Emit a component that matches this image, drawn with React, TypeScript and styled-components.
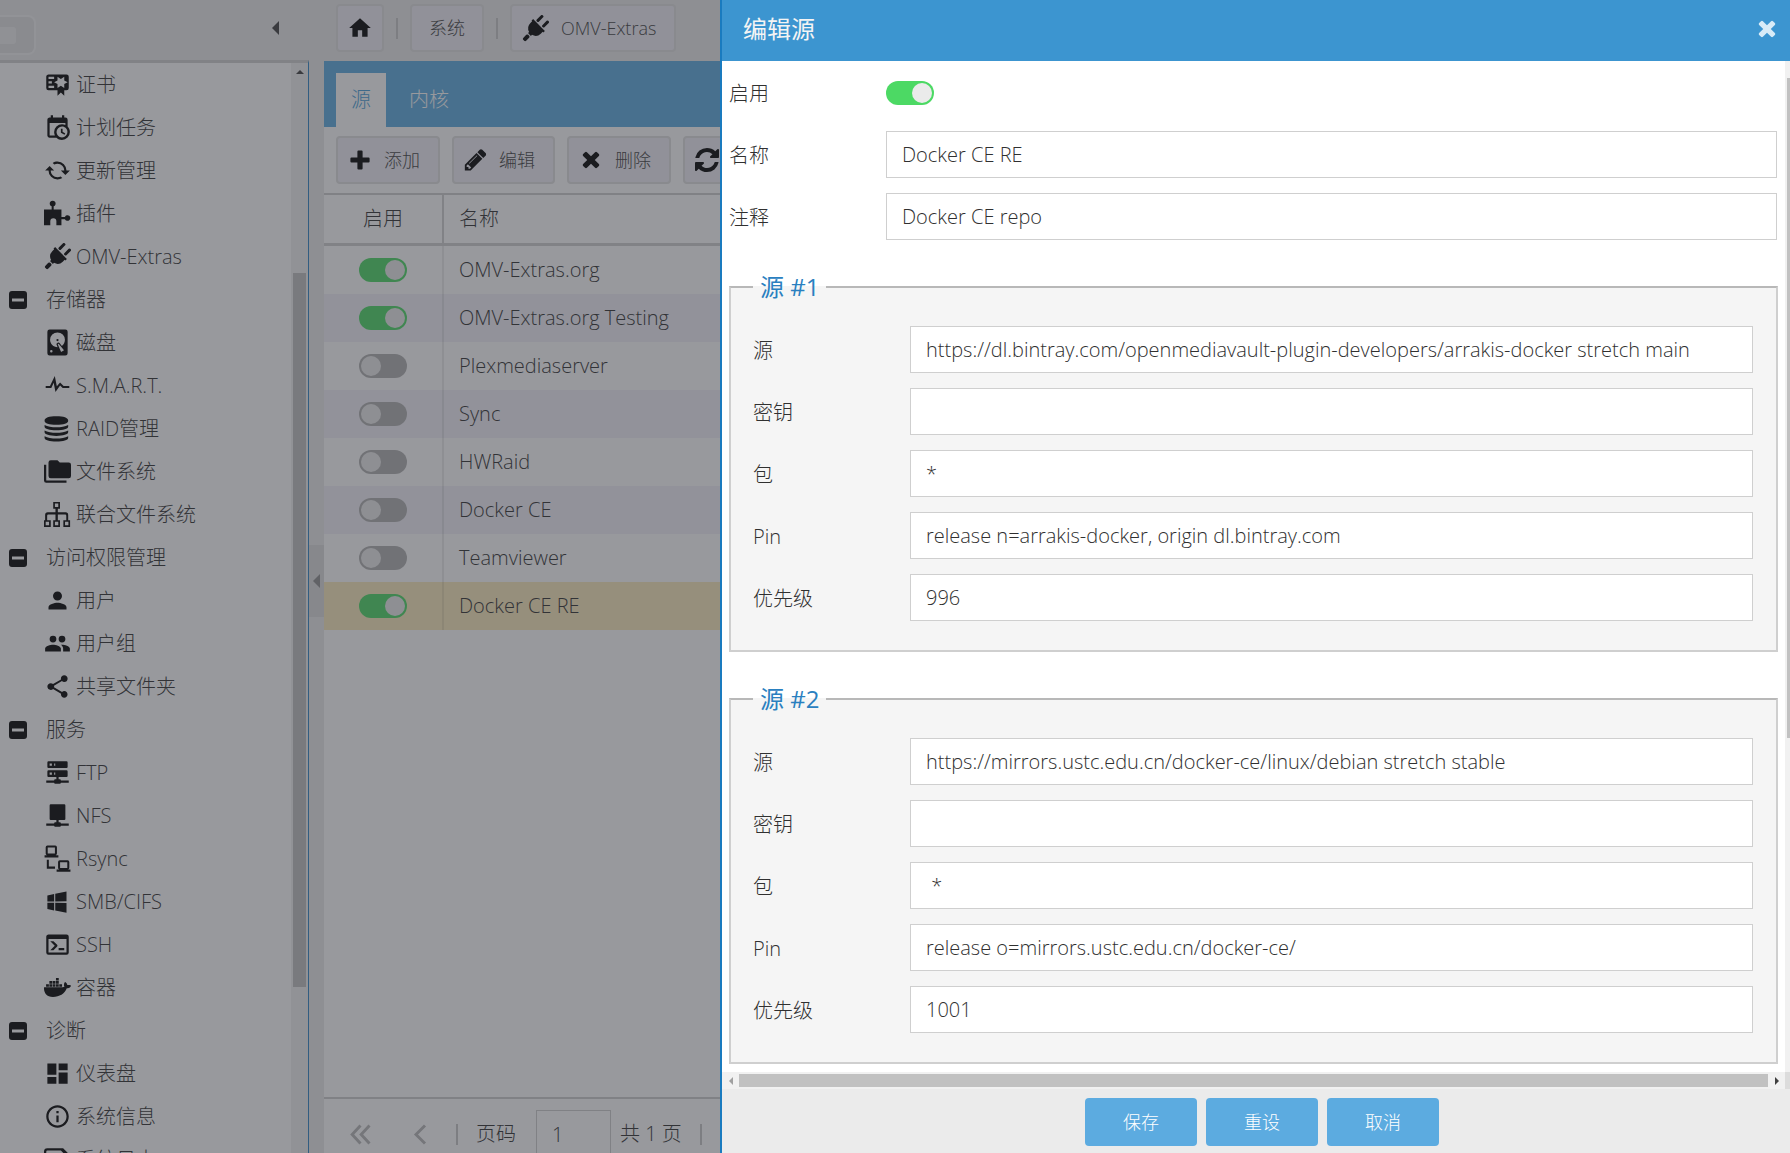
import React, { useState } from 'react';
import styled, { createGlobalStyle } from 'styled-components';
import { MdDashboard, MdHome, MdInfoOutline, MdPerson, MdShare } from 'react-icons/md';
import { FaDocker } from 'react-icons/fa';

const GlobalStyle = createGlobalStyle`
  * { box-sizing: border-box; }
  body {
    margin: 0;
    overflow: hidden;
    background: #ebebeb;
    color: #303030;
    font-family: "Open Sans", "Noto Sans CJK SC", sans-serif;
    font-size: 20px;
    font-weight: 300;
    line-height: 28px;
  }
  button, input { font: inherit; color: inherit; }
  button { cursor: pointer; }
`;

/* ---------- icons ---------- */

const Glyph = styled.svg<{ $size?: number }>`
  display: block;
  flex: none;
  width: ${(p) => p.$size ?? 27}px;
  height: ${(p) => p.$size ?? 27}px;
  fill: currentColor;
`;

const PathIcon = ({ d, size, box = '0 0 24 24' }: { d: string; size?: number; box?: string }) => (
  <Glyph $size={size} viewBox={box} fillRule="evenodd" aria-hidden="true">
    <path d={d} />
  </Glyph>
);

const paths = {
  certificate:
    'M4,3C2.89,3 2,3.89 2,5V15A2,2 0 0,0 4,17H12V22L15,19L18,22V17H20A2,2 0 0,0 22,15V8L22,6V5A2,2 0 0,0 20,3H16V3H4M12,5L15,7L18,5V8.5L21,10L18,11.5V15L15,13L12,15V11.5L9,10L12,8.5V5M4,5H9V7H4V5M4,9H7V11H4V9M4,13H9V15H4V13Z',
  calendar:
    'M15,13H16.5V15.82L18.94,17.23L18.19,18.53L15,16.69V13M19,8H5V19H9.67C9.24,18.09 9,17.07 9,16A7,7 0 0,1 16,9C17.07,9 18.09,9.24 19,9.67V8M5,21C3.89,21 3,20.1 3,19V5C3,3.89 3.89,3 5,3H6V1H8V3H16V1H18V3H19A2,2 0 0,1 21,5V11.1C22.24,12.36 23,14.09 23,16A7,7 0 0,1 16,23C14.09,23 12.36,22.24 11.1,21H5M16,11.15A4.85,4.85 0 0,0 11.15,16C11.15,18.68 13.32,20.85 16,20.85A4.85,4.85 0 0,0 20.85,16C20.85,13.32 18.68,11.15 16,11.15Z',
  update:
    'M19,16L15,12H18C18,8.69 15.31,6 12,6C11,6 10.03,6.25 9.2,6.7L7.74,5.24C8.97,4.46 10.43,4 12,4A8,8 0 0,1 20,12H23L19,16M6,12C6,15.31 8.69,18 12,18C13,18 13.97,17.75 14.8,17.3L16.26,18.76C15.03,19.54 13.57,20 12,20A8,8 0 0,1 4,12H1L5,8L9,12H6Z',
  puzzle:
    'M0,8.5H6.8V5.6A2.6,2.6 0 1,1 8.6,5.6V8.5H15.5V15H18.6A2.5,2.5 0 1,1 18.6,17H15.5V22.5H11V19A2.7,2.7 0 1,0 5.6,19V22.5H0Z',
  disk:
    'M5,0.5H19A2,2 0 0,1 21,2.5V21.5A2,2 0 0,1 19,23.5H5A2,2 0 0,1 3,21.5V2.5A2,2 0 0,1 5,0.5M12,3A6.6,6.6 0 0,0 5.4,9.6C5.4,13.2 8.4,16.2 12.1,16.2L11.22,13.97C10.95,13.4 11.11,12.88 11.59,12.6L12.45,12.1C12.93,11.8 13.54,11.99 13.82,12.47L15.9,15C17.6,13.8 18.6,11.8 18.6,9.6A6.6,6.6 0 0,0 12,3M12,8.8A1,1 0 0,1 12,10.8A1,1 0 0,1 12,8.8M6.5,18.6A1.1,1.1 0 0,0 6.5,20.8A1.1,1.1 0 0,0 6.5,18.6M12.2,13.6L15.2,20.4L17.8,18.9L13,13.1L12.2,13.6Z',
  pulse:
    'M1.5,12.5H5.3L9.6,3.6L11.4,12.6L14.3,9.4L17.4,12.5H22.5V14.3H16.6L14.3,12L10.2,17.8L8.6,9.6L6.5,14.3H1.5Z',
  database:
    'M0.5,5C0.5,2.5 4.5,1.2 11,1.2S21.5,2.5 21.5,5S17.5,8.6 11,8.6S0.5,7.5 0.5,5M0.5,8.8C3,10.4 7,10.8 11,10.8S19,10.4 21.5,8.8V10.2C21.5,12.4 17,13.6 11,13.6S0.5,12.4 0.5,10.2ZM0.5,13.8C3,15.4 7,15.8 11,15.8S19,15.4 21.5,13.8V15.2C21.5,17.4 17,18.6 11,18.6S0.5,17.4 0.5,15.2ZM0.5,18.8C3,20.4 7,20.8 11,20.8S19,20.4 21.5,18.8V20.2C21.5,22.4 17,23.6 11,23.6S0.5,22.4 0.5,20.2Z',
  folders:
    'M22,4H14L12,2H6A2,2 0 0,0 4,4V16A2,2 0 0,0 6,18H22A2,2 0 0,0 24,16V6A2,2 0 0,0 22,4M2,6H0V20A2,2 0 0,0 2,22H20V20H2V6Z',
  sitemap:
    'M8.2,0.8H14.2V6.8H12.3V10H19.2Q21.5,10 21.5,12.5V17H23.2V23H17.2V17H19.8V13Q19.8,12 18.8,12H12.3V17H14.2V23H8.2V17H10.2V12H3.8Q2.8,12 2.8,13V17H6V23H0V17H1V12.5Q1,10 3.3,10H10.2V6.8H8.2ZM9.7,2.3V5.3H12.7V2.3ZM1.5,18.5V21.5H4.5V18.5ZM9.7,18.5V21.5H12.7V18.5ZM18.7,18.5V21.5H21.7V18.5Z',
  group:
    'M16,13C15.71,13 15.38,13 15.03,13.05C16.19,13.89 17,15 17,16.5V19H23V16.5C23,14.17 18.33,13 16,13M8,13C5.67,13 1,14.17 1,16.5V19H15V16.5C15,14.17 10.33,13 8,13M8,11A3,3 0 0,0 11,8A3,3 0 0,0 8,5A3,3 0 0,0 5,8A3,3 0 0,0 8,11M16,11A3,3 0 0,0 19,8A3,3 0 0,0 16,5A3,3 0 0,0 13,8A3,3 0 0,0 16,11Z',
  server:
    'M13,18H14A1,1 0 0,1 15,19H22V21H15A1,1 0 0,1 14,22H10A1,1 0 0,1 9,21H2V19H9A1,1 0 0,1 10,18H11V16H4A1,1 0 0,1 3,15V11A1,1 0 0,1 4,10H20A1,1 0 0,1 21,11V15A1,1 0 0,1 20,16H13V18M4,2H20A1,1 0 0,1 21,3V7A1,1 0 0,1 20,8H4A1,1 0 0,1 3,7V3A1,1 0 0,1 4,2M9,6H10V4H9V6M9,14H10V12H9V14M5,4V6H7V4H5M5,12V14H7V12H5Z',
  nfs: 'M13,18H14A1,1 0 0,1 15,19H22V21H15A1,1 0 0,1 14,22H10A1,1 0 0,1 9,21H2V19H9A1,1 0 0,1 10,18H11V16H6A1,1 0 0,1 5,15V3A1,1 0 0,1 6,2H18A1,1 0 0,1 19,3V15A1,1 0 0,1 18,16H13Z',
  rsync:
    'M3,0.5H10A1.5,1.5 0 0,1 11.5,2V7.5A1.5,1.5 0 0,1 10.4,9H12.8V11H0.5V9H2.6A1.5,1.5 0 0,1 1.5,7.5V2A1.5,1.5 0 0,1 3,0.5M3.3,2.3V7.5H9.7V2.3ZM2.5,13H4.3V19H9.8V21H2.5ZM14,13.5H21A1.5,1.5 0 0,1 22.5,15V20A1.5,1.5 0 0,1 21.4,21.7H23.5V23.7H11.2V21.7H13.6A1.5,1.5 0 0,1 12.5,20V15A1.5,1.5 0 0,1 14,13.5M14.3,15.3V20.5H20.7V15.3Z',
  windows:
    'M3,12V6.75L9,5.43V11.91L3,12M20,3V11.75L10,11.9V5.21L20,3M3,13L9,13.09V19.9L3,18.75V13M20,13.25V22L10,20.09V13.1L20,13.25Z',
  console:
    'M20,19V7H4V19H20M20,3A2,2 0 0,1 22,5V19A2,2 0 0,1 20,21H4A2,2 0 0,1 2,19V5C2,3.89 2.9,3 4,3H20M13,17V15H18V17H13M9.58,13L5.57,9H8.4L11.7,12.3C12.09,12.69 12.09,13.33 11.7,13.72L8.42,17H5.59L9.58,13Z',
  log: 'M3,2H17L23,8V22H3A3,3 0 0,1 0,19V5A3,3 0 0,1 3,2M3,4A1,1 0 0,0 2,5V19A1,1 0 0,0 3,20H20V9L15,4Z',
  minus:
    'M4,0H20A4,4 0 0,1 24,4V20A4,4 0 0,1 20,24H4A4,4 0 0,1 0,20V4A4,4 0 0,1 4,0M4,10V14H20V10Z',
  plus: 'M10.4,2.4H13.6A1,1 0 0,1 14.6,3.4V9.4H20.6A1,1 0 0,1 21.6,10.4V13.6A1,1 0 0,1 20.6,14.6H14.6V20.6A1,1 0 0,1 13.6,21.6H10.4A1,1 0 0,1 9.4,20.6V14.6H3.4A1,1 0 0,1 2.4,13.6V10.4A1,1 0 0,1 3.4,9.4H9.4V3.4A1,1 0 0,1 10.4,2.4Z',
  cross:
    'M1298 1322q0 40-28 68l-136 136q-28 28-68 28t-68-28l-294-294-294 294q-28 28-68 28t-68-28l-136-136q-28-28-28-68t28-68l294-294-294-294q-28-28-28-68t28-68l136-136q28-28 68-28t68 28l294 294 294-294q28-28 68-28t68 28l136 136q28 28 28 68t-28 68l-294 294 294 294q28 28 28 68z',
  pencil:
    'M363 1536l91-91-235-235-91 91v107h128v128h107zM886 608q0-22-22-22-10 0-17 7l-542 542q-7 7-7 17 0 22 22 22 10 0 17-7l542-542q7-7 7-17zM832 416l416 416-832 832h-416v-416zM1515 512q0 53-37 90l-166 166-416-416 166-165q36-38 90-38 53 0 91 38l235 234q37 39 37 91z',
  refresh:
    'M1511 1056q0 5-1 7-64 268-268 434.5t-478 166.5q-146 0-282.5-55t-243.5-157l-129 129q-19 19-45 19t-45-19-19-45v-448q0-26 19-45t45-19h448q26 0 45 19t19 45-19 45l-137 137q71 66 161 102t187 36q134 0 250-65t186-179q11-17 53-117 8-23 30-23h192q13 0 22.5 9.5t9.5 22.5zM1536 256v448q0 26-19 45t-45 19h-448q-26 0-45-19t-19-45 19-45l138-138q-148-137-349-137-134 0-250 65t-186 179q-11 17-53 117-8 23-30 23h-199q-13 0-22.5-9.5t-9.5-22.5v-7q65-268 270-434.5t480-166.5q146 0 284 55.5t245 156.5l130-129q19-19 45-19t45 19 19 45z',
};

const CrossIcon = () => <PathIcon d={paths.cross} size={24} box="-160 96 1728 1728" />;

const PlugIcon = () => (
  <Glyph viewBox="0 0 24 24" aria-hidden="true">
    <g transform="rotate(45 12 12)">
      <path d="M4.6,7.6H19.4V9.6H18.6V12A6.6,6.6 0 0 1 13.8,18.2V19.6H10.2V18.2A6.6,6.6 0 0 1 5.4,12V9.6H4.6Z" />
      <rect x="7.2" y="-0.8" width="2.6" height="7.4" rx="1" />
      <rect x="14.2" y="-0.8" width="2.6" height="7.4" rx="1" />
      <rect x="10.2" y="20.6" width="3.6" height="6.2" rx="1.2" />
    </g>
  </Glyph>
);

const FirstPage = () => (
  <Glyph viewBox="0 0 24 24" aria-hidden="true">
    <path d="M12,4L4.6,12L12,20M20,4L12.6,12L20,20" fill="none" stroke="currentColor" strokeWidth="2.6" />
  </Glyph>
);

const PreviousPage = () => (
  <Glyph viewBox="0 0 24 24" aria-hidden="true">
    <path d="M16,4L8,12L16,20" fill="none" stroke="currentColor" strokeWidth="2.6" />
  </Glyph>
);

/* ---------- shared ---------- */

const Shell = styled.div`
  display: flex;
  height: 100vh;
  overflow: hidden;
`;

const Arrow = styled.span<{ $dir: 'up' | 'left' | 'right'; $size: number; $color?: string }>`
  width: 0;
  height: 0;
  border: ${(p) => p.$size}px solid transparent;
  ${(p) => p.$dir === 'up' && `border-top-width: 0; border-bottom-color: ${p.$color ?? '#404040'};`}
  ${(p) => p.$dir === 'left' && `border-left-width: 0; border-right-color: ${p.$color ?? '#404040'};`}
  ${(p) => p.$dir === 'right' && `border-right-width: 0; border-left-color: ${p.$color ?? '#404040'};`}
`;

const PlainButton = styled.button`
  display: flex;
  align-items: center;
  justify-content: center;
  padding: 0;
  border: 0;
  background: none;
`;

const Toggle = styled.input`
  appearance: none;
  flex: none;
  display: flex;
  width: 48px;
  height: 24px;
  margin: 0;
  padding: 2px;
  border-radius: 12px;
  background: #b0b0b0;
  &::before {
    content: '';
    width: 20px;
    height: 20px;
    border-radius: 50%;
    background: #ebebeb;
  }
  &:checked {
    background: #4cd964;
    justify-content: flex-end;
  }
`;

/* ---------- sidebar ---------- */

const Sidebar = styled.aside`
  flex: none;
  display: flex;
  flex-direction: column;
  width: 309px;
`;

const Brand = styled.div`
  flex: none;
  display: flex;
  align-items: center;
  justify-content: space-between;
  height: 60px;
  padding-right: 22px;
`;

const BrandMark = styled.div`
  display: flex;
  align-items: center;
  width: 36px;
  height: 40px;
  margin-top: 10px;
  border: 2px solid #f2f2f2;
  border-left: 0;
  border-radius: 0 8px 8px 0;
  background: #e2e2e2;
  &::before {
    content: '';
    width: 16px;
    height: 17px;
    border-radius: 0 3px 3px 0;
    background: #efefef;
  }
`;

const CollapseButton = styled(PlainButton)`
  width: 24px;
  height: 40px;
  margin-bottom: 5px;
`;

const NavArea = styled.div`
  flex: 1;
  min-height: 0;
  display: flex;
  border-top: 3px solid #d0d0d0;
  border-right: 1px solid #2f86c6;
  background: #fff;
`;

const NavList = styled.ul`
  flex: 1;
  margin: 0;
  padding: 0;
  list-style: none;
  overflow: hidden;
`;

const NavLink = styled.a<{ $group?: boolean }>`
  display: flex;
  align-items: center;
  height: 43px;
  padding-left: ${(p) => (p.$group ? 9 : 44)}px;
  gap: ${(p) => (p.$group ? 19 : 5)}px;
  color: #000;
  text-decoration: none;
`;

const NavText = styled.span`
  color: #303030;
`;

const Track = styled.div`
  flex: none;
  display: flex;
  flex-direction: column;
  align-items: center;
  width: 17px;
  background: #f1f1f1;
`;

const TrackEnd = styled.div`
  flex: none;
  display: flex;
  align-items: center;
  justify-content: center;
  width: 17px;
  height: 17px;
`;

const Thumb = styled.div<{ $grow: number }>`
  flex: ${(p) => p.$grow};
  width: 13px;
  background: #c1c1c1;
`;

const TrackSpace = styled.div<{ $grow: number }>`
  flex: ${(p) => p.$grow};
`;

const Splitter = styled.div`
  flex: none;
  display: flex;
  align-items: center;
  width: 15px;
  padding-top: 9px;
`;

const SplitHandle = styled(PlainButton)`
  width: 15px;
  height: 72px;
  background: #dddddd;
`;

/* ---------- main panel ---------- */

const Main = styled.main`
  flex: 1;
  min-width: 0;
  display: flex;
  flex-direction: column;
`;

const Breadcrumbs = styled.nav`
  flex: none;
  display: flex;
  align-items: center;
  gap: 12px;
  height: 61px;
  padding: 0 12px 5px;
`;

const Divider = styled.span`
  width: 2px;
  height: 21px;
  background: #c8c8c8;
`;

const ToolButton = styled.button<{ $compact?: boolean }>`
  flex: none;
  display: flex;
  align-items: center;
  justify-content: center;
  gap: 12px;
  height: 48px;
  padding: 0 ${(p) => (p.$compact ? 9 : 18)}px 0 ${(p) => (p.$compact ? 9 : 10)}px;
  border: 2px solid #e0e0e0;
  border-radius: 4px;
  background: #f0eff6;
  color: #000;
  font-size: 18px;
`;

const ToolText = styled.span`
  color: #404040;
`;

const CrumbText = styled(ToolText)`
  padding: 0 8px;
`;

const TabBar = styled.div`
  flex: none;
  display: flex;
  align-items: flex-end;
  gap: 8px;
  height: 66px;
  padding: 0 12px;
  background: #5cace0;
`;

const Tab = styled.button<{ $active?: boolean }>`
  height: 54px;
  padding: 0 15px;
  border: 0;
  background: ${(p) => (p.$active ? '#fff' : 'transparent')};
  color: ${(p) => (p.$active ? '#4a9fd8' : '#fff')};
`;

const Toolbar = styled.div`
  flex: none;
  display: flex;
  align-items: center;
  gap: 12px;
  height: 68px;
  padding: 0 12px;
  border-bottom: 2px solid #cfcfcf;
  background: #fff;
`;

const GridArea = styled.div`
  flex: 1;
  min-height: 0;
  background: #fff;
`;

const Grid = styled.table`
  width: 100%;
  border-collapse: separate;
  border-spacing: 0;
  table-layout: fixed;
`;

const HeadCell = styled.th<{ $narrow?: boolean }>`
  width: ${(p) => (p.$narrow ? '120px' : 'auto')};
  height: 51px;
  padding: 0 ${(p) => (p.$narrow ? 0 : 15)}px;
  border-bottom: 3px solid #d0d0d0;
  border-right: ${(p) => (p.$narrow ? '2px solid #d0d0d0' : '0')};
  font-weight: 300;
  text-align: ${(p) => (p.$narrow ? 'center' : 'left')};
`;

const Row = styled.tr<{ $selected: boolean }>`
  background: #fff;
  &:nth-child(even) { background: #f2f1f8; }
  ${(p) => p.$selected && '&&:nth-child(n) { background: #fbebbc; }'}
`;

const Cell = styled.td<{ $narrow?: boolean }>`
  height: 48px;
  padding: 0 ${(p) => (p.$narrow ? 35 : 15)}px 1px;
  border-right: ${(p) => (p.$narrow ? '2px solid rgba(0, 0, 0, 0.08)' : '0')};
`;

const Pager = styled.div`
  flex: none;
  display: flex;
  align-items: flex-start;
  height: 56px;
  padding: 11px 22px 0 23px;
  border-top: 2px solid #cfcfcf;
  background: #fff;
`;

const PagerItem = styled.div<{ $gap: number }>`
  flex: none;
  display: flex;
  align-items: center;
  height: 48px;
  margin-right: ${(p) => p.$gap}px;
`;

const PagerButton = styled(PlainButton)`
  color: #b8b8b8;
`;

const PageInput = styled.input`
  width: 75px;
  height: 48px;
  padding: 0 15px;
  border: 1px solid #cfcfcf;
  background: #fff;
`;

/* ---------- dialog ---------- */

const Mask = styled.div`
  position: fixed;
  inset: 0;
  display: flex;
  justify-content: flex-end;
  overflow: hidden;
  background: rgba(53, 55, 63, 0.51);
`;

const Dialog = styled.section`
  flex: none;
  display: flex;
  flex-direction: column;
  width: calc(100% - 708px);
  margin-right: -12px;
  border-left: 2px solid #1a7bbf;
  background: #fff;
`;

const DialogHeader = styled.header`
  flex: none;
  display: flex;
  align-items: center;
  justify-content: space-between;
  height: 61px;
  padding: 0 23px 3px 21px;
  background: #3c95d0;
  color: #d8ebf7;
`;

const DialogTitle = styled.h1`
  margin: 0;
  color: #f4f4f4;
  font-size: 24px;
  font-weight: 400;
`;

const ScrollArea = styled.div`
  flex: 1;
  min-height: 0;
  display: flex;
`;

const Form = styled.form`
  flex: 1;
  min-width: 0;
  display: flex;
  flex-direction: column;
  gap: 15px;
  padding: 8px 7px 8px;
  overflow: hidden;
`;

const Field = styled.div`
  flex: none;
  display: flex;
  align-items: center;
  height: 47px;
  padding-right: 1px;
`;

const FieldLabel = styled.label`
  flex: none;
  width: 157px;
  padding-top: 2px;
`;

const TextBox = styled.input`
  flex: 1;
  min-width: 0;
  height: 47px;
  padding: 0 15px;
  border: 1px solid #cfcfcf;
  background: #fff;
  outline: 0;
`;

const Fieldset = styled.fieldset`
  flex: none;
  display: flex;
  flex-direction: column;
  gap: 15px;
  min-width: 0;
  margin: 16px 0 0;
  padding: 23px 22px 29px;
  border: 2px solid #cfcfcf;
  border-top-color: #b8b8b8;
  background: #f5f5f5;
`;

const Legend = styled.legend`
  padding: 0 7px;
  color: #2a80c0;
  font-size: 24px;
  font-weight: 400;
  line-height: 32px;
`;

const BottomTrack = styled.div`
  flex: none;
  display: flex;
  align-items: center;
  height: 17px;
  background: #f1f1f1;
`;

const BottomThumb = styled.div`
  flex: 1;
  height: 13px;
  background: #c1c1c1;
`;

const TrackCorner = styled.div`
  width: 17px;
  height: 17px;
  background: #dcdcdc;
`;

const DialogFooter = styled.footer`
  flex: none;
  display: flex;
  justify-content: center;
  gap: 9px;
  height: 64px;
  padding: 9px 0 7px;
  background: #ebebeb;
`;

const ActionButton = styled.button`
  width: 112px;
  height: 48px;
  padding: 0;
  border: 0;
  border-radius: 4px;
  background: #5cabe0;
  color: #fff;
  font-size: 18px;
`;

/* ---------- data ---------- */

type NavEntry = { label: string; icon?: React.ReactNode };

const nav: NavEntry[] = [
  { label: '证书', icon: <PathIcon d={paths.certificate} /> },
  { label: '计划任务', icon: <PathIcon d={paths.calendar} /> },
  { label: '更新管理', icon: <PathIcon d={paths.update} /> },
  { label: '插件', icon: <PathIcon d={paths.puzzle} /> },
  { label: 'OMV-Extras', icon: <PlugIcon /> },
  { label: '存储器' },
  { label: '磁盘', icon: <PathIcon d={paths.disk} /> },
  { label: 'S.M.A.R.T.', icon: <PathIcon d={paths.pulse} /> },
  { label: 'RAID管理', icon: <PathIcon d={paths.database} /> },
  { label: '文件系统', icon: <PathIcon d={paths.folders} /> },
  { label: '联合文件系统', icon: <PathIcon d={paths.sitemap} /> },
  { label: '访问权限管理' },
  { label: '用户', icon: <MdPerson size={27} /> },
  { label: '用户组', icon: <PathIcon d={paths.group} /> },
  { label: '共享文件夹', icon: <MdShare size={27} /> },
  { label: '服务' },
  { label: 'FTP', icon: <PathIcon d={paths.server} /> },
  { label: 'NFS', icon: <PathIcon d={paths.nfs} /> },
  { label: 'Rsync', icon: <PathIcon d={paths.rsync} /> },
  { label: 'SMB/CIFS', icon: <PathIcon d={paths.windows} /> },
  { label: 'SSH', icon: <PathIcon d={paths.console} /> },
  { label: '容器', icon: <FaDocker size={27} /> },
  { label: '诊断' },
  { label: '仪表盘', icon: <MdDashboard size={27} /> },
  { label: '系统信息', icon: <MdInfoOutline size={27} /> },
  { label: '系统日志', icon: <PathIcon d={paths.log} /> },
];

const repos = [
  { name: 'OMV-Extras.org', enabled: true },
  { name: 'OMV-Extras.org Testing', enabled: true },
  { name: 'Plexmediaserver', enabled: false },
  { name: 'Sync', enabled: false },
  { name: 'HWRaid', enabled: false },
  { name: 'Docker CE', enabled: false },
  { name: 'Teamviewer', enabled: false },
  { name: 'Docker CE RE', enabled: true },
];

const sources = [
  {
    title: '源 #1',
    values: [
      'https://dl.bintray.com/openmediavault-plugin-developers/arrakis-docker stretch main',
      '',
      '*',
      'release n=arrakis-docker, origin dl.bintray.com',
      '996',
    ],
  },
  {
    title: '源 #2',
    values: [
      'https://mirrors.ustc.edu.cn/docker-ce/linux/debian stretch stable',
      '',
      ' *',
      'release o=mirrors.ustc.edu.cn/docker-ce/',
      '1001',
    ],
  },
];

const sourceLabels = ['源', '密钥', '包', 'Pin', '优先级'];

const TextField = ({ id, label, value }: { id: string; label: string; value: string }) => (
  <Field>
    <FieldLabel htmlFor={id}>{label}</FieldLabel>
    <TextBox id={id} type="text" defaultValue={value} />
  </Field>
);

export default function App() {
  const [enabled, setEnabled] = useState(true);

  return (
    <>
      <GlobalStyle />
      <Shell>
        <Sidebar>
          <Brand>
            <BrandMark />
            <CollapseButton type="button" aria-label="收起导航">
              <Arrow $dir="left" $size={7} />
            </CollapseButton>
          </Brand>
          <NavArea>
            <NavList>
              {nav.map((entry) => (
                <li key={entry.label}>
                  <NavLink href="#" $group={!entry.icon}>
                    {entry.icon ?? <PathIcon d={paths.minus} size={18} />}
                    <NavText>{entry.label}</NavText>
                  </NavLink>
                </li>
              ))}
            </NavList>
            <Track>
              <TrackEnd>
                <Arrow $dir="up" $size={4} />
              </TrackEnd>
              <TrackSpace $grow={193} />
              <Thumb $grow={714} />
              <TrackSpace $grow={166} />
            </Track>
          </NavArea>
        </Sidebar>

        <Splitter>
          <SplitHandle type="button" aria-label="折叠">
            <Arrow $dir="left" $size={7} $color="#909090" />
          </SplitHandle>
        </Splitter>

        <Main>
          <Breadcrumbs>
            <ToolButton type="button" $compact aria-label="主页">
              <MdHome size={26} />
            </ToolButton>
            <Divider />
            <ToolButton type="button" $compact>
              <CrumbText>系统</CrumbText>
            </ToolButton>
            <Divider />
            <ToolButton type="button">
              <PlugIcon />
              <ToolText>OMV-Extras</ToolText>
            </ToolButton>
          </Breadcrumbs>

          <TabBar role="tablist">
            <Tab type="button" role="tab" aria-selected $active>
              源
            </Tab>
            <Tab type="button" role="tab" aria-selected={false}>
              内核
            </Tab>
          </TabBar>

          <Toolbar>
            <ToolButton type="button">
              <PathIcon d={paths.plus} size={24} />
              <ToolText>添加</ToolText>
            </ToolButton>
            <ToolButton type="button">
              <PathIcon d={paths.pencil} size={23} box="-60 128 1640 1640" />
              <ToolText>编辑</ToolText>
            </ToolButton>
            <ToolButton type="button">
              <CrossIcon />
              <ToolText>删除</ToolText>
            </ToolButton>
            <ToolButton type="button" aria-label="检查">
              <PathIcon d={paths.refresh} size={24} box="0 128 1536 1536" />
            </ToolButton>
          </Toolbar>

          <GridArea>
            <Grid>
              <thead>
                <tr>
                  <HeadCell $narrow>启用</HeadCell>
                  <HeadCell>名称</HeadCell>
                </tr>
              </thead>
              <tbody>
                {repos.map((repo) => (
                  <Row key={repo.name} $selected={repo.name === 'Docker CE RE'}>
                    <Cell $narrow>
                      <Toggle type="checkbox" aria-label={repo.name} defaultChecked={repo.enabled} />
                    </Cell>
                    <Cell>{repo.name}</Cell>
                  </Row>
                ))}
              </tbody>
            </Grid>
          </GridArea>

          <Pager>
            <PagerItem $gap={33}>
              <PagerButton type="button" aria-label="首页">
                <FirstPage />
              </PagerButton>
            </PagerItem>
            <PagerItem $gap={22}>
              <PagerButton type="button" aria-label="上一页">
                <PreviousPage />
              </PagerButton>
            </PagerItem>
            <PagerItem $gap={18}>
              <Divider />
            </PagerItem>
            <PagerItem $gap={20} as="label" htmlFor="page-number">
              页码
            </PagerItem>
            <PagerItem $gap={9}>
              <PageInput id="page-number" type="text" defaultValue="1" />
            </PagerItem>
            <PagerItem $gap={18}>共 1 页</PagerItem>
            <PagerItem $gap={18}>
              <Divider />
            </PagerItem>
          </Pager>
        </Main>
      </Shell>

      <Mask>
        <Dialog role="dialog" aria-modal="true" aria-labelledby="dialog-title">
          <DialogHeader>
            <DialogTitle id="dialog-title">编辑源</DialogTitle>
            <PlainButton type="button" aria-label="关闭">
              <CrossIcon />
            </PlainButton>
          </DialogHeader>

          <ScrollArea>
            <Form>
              <Field>
                <FieldLabel htmlFor="enabled">启用</FieldLabel>
                <Toggle
                  id="enabled"
                  type="checkbox"
                  checked={enabled}
                  onChange={(e) => setEnabled(e.target.checked)}
                />
              </Field>
              <TextField id="name" label="名称" value="Docker CE RE" />
              <TextField id="comment" label="注释" value="Docker CE repo" />
              {sources.map((source, s) => (
                <Fieldset key={source.title}>
                  <Legend>{source.title}</Legend>
                  {sourceLabels.map((label, i) => (
                    <TextField key={label} id={`source-${s}-${i}`} label={label} value={source.values[i]} />
                  ))}
                </Fieldset>
              ))}
            </Form>
            <Track>
              <TrackEnd />
              <Thumb $grow={660} />
              <TrackSpace $grow={334} />
            </Track>
          </ScrollArea>
          <BottomTrack>
            <TrackEnd>
              <Arrow $dir="left" $size={4} $color="#a0a0a0" />
            </TrackEnd>
            <BottomThumb />
            <TrackEnd>
              <Arrow $dir="right" $size={4} />
            </TrackEnd>
            <TrackCorner />
          </BottomTrack>

          <DialogFooter>
            <ActionButton type="button">保存</ActionButton>
            <ActionButton type="button">重设</ActionButton>
            <ActionButton type="button">取消</ActionButton>
          </DialogFooter>
        </Dialog>
      </Mask>
    </>
  );
}
